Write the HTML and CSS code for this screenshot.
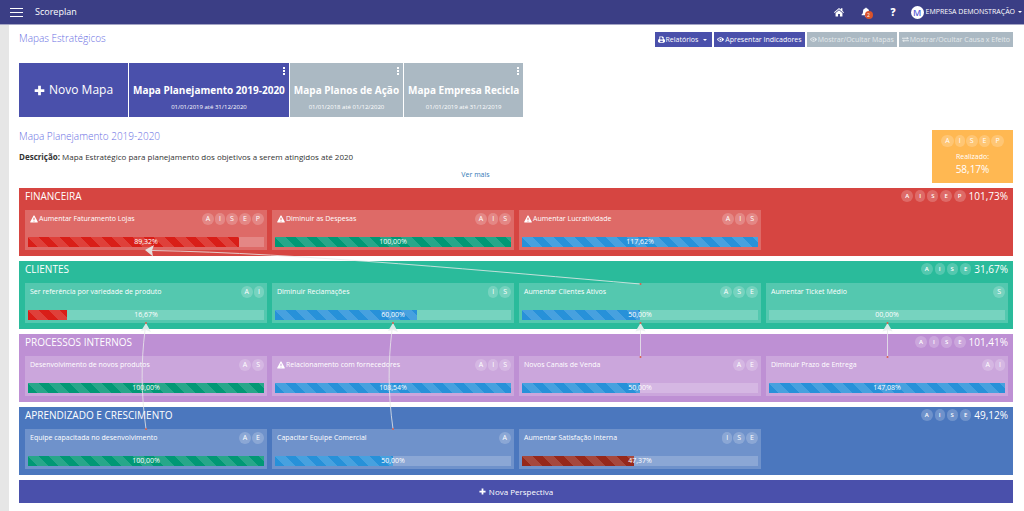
FILE: index.html
```html
<!DOCTYPE html>
<html lang="pt-BR">
<head>
<meta charset="utf-8">
<title>Scoreplan</title>
<link rel="stylesheet" href="styles.css">
</head>
<body>
<svg class="sprite" aria-hidden="true">
  <symbol id="warn" viewBox="0 0 16 16"><path fill-rule="evenodd" d="M8 1c.5 0 .9.3 1.100.6l6.400 11.700c.5 1-.1 1.700-1.100 1.700H1.600c-1 0-1.600-.7-1.100-1.700L6.900 1.600C7.100 1.300 7.500 1 8 1zM6.800 5.500l.3 4.700h1.800l.3-4.700zM7 11.300v1.800h2v-1.800z"/></symbol>
  <symbol id="plus" viewBox="0 0 16 16"><path d="M6 1h4v5h5v4h-5v5H6v-5H1V6h5z"/></symbol>
  <symbol id="eye" viewBox="0 0 16 16"><path fill-rule="evenodd" d="M8 3c3.500 0 6.500 2.200 8 5-1.500 2.800-4.500 5-8 5S1.500 10.800 0 8c1.500-2.800 4.500-5 8-5zm0 1.300a3.700 3.700 0 1 0 0 7.400 3.700 3.700 0 0 0 0-7.400zM8 6a2 2 0 1 1 0 4 2 2 0 0 1 0-4zM2 8c.6 1 1.500 2 2.500 2.600a5 5 0 0 1 0-5.200C3.500 6 2.600 7 2 8z"/></symbol>
  <symbol id="print" viewBox="0 0 16 16"><path fill-rule="evenodd" d="M3 1h8l2 2v4h1l2 2v5h-3v2H3v-2H0V9l2-2h1zm2 2v5h6V5H9V3zm0 8v3h6v-3z"/></symbol>
  <symbol id="swap" viewBox="0 0 16 16"><path d="M0 4h11V1.500L16 5l-5 3.500V6.500H0zM16 12H5v2.500L0 11l5-3.500v2H16z"/></symbol>
  <symbol id="home" viewBox="0 0 16 16"><path d="M8 1.500 11 4V2h2.500v4.200L16 8.300l-1 1.200L8 3.700 1 9.500 0 8.300zM8 5l5.500 4.500V15H9.500v-4h-3v4h-4V9.500z"/></symbol>
  <symbol id="bell" viewBox="0 0 16 16"><path d="M7 1h2v1c2.500.5 3.800 2.500 3.800 5 0 2.600.8 4 2.200 5v1H1v-1c1.400-1 2.200-2.400 2.200-5C3.200 4.500 4.500 2.500 7 2zM6 14h4c0 1.200-.8 2-2 2s-2-.8-2-2z"/></symbol>
</svg>

<header class="topbar">
  <button class="menu" aria-label="Menu"><span></span><span></span><span></span></button>
  <a class="brand" href="#">Scoreplan</a>
  <nav class="topnav">
    <a href="#" aria-label="Início"><svg class="icon"><use href="#home"/></svg></a>
    <a href="#" class="alerts" aria-label="Notificações"><svg class="icon"><use href="#bell"/></svg><span class="count">2</span></a>
    <a href="#" class="help">?</a>
    <button class="account"><span class="avatar">M</span>EMPRESA DEMONSTRAÇÃO<span class="caret"></span></button>
  </nav>
</header>

<main class="page">
  <div class="titlebar">
    <h1 class="heading">Mapas Estratégicos</h1>
    <div class="actions">
      <button class="action"><svg class="icon"><use href="#print"/></svg>Relatórios<span class="caret"></span></button>
      <button class="action"><svg class="icon"><use href="#eye"/></svg>Apresentar Indicadores</button>
      <button class="action muted"><svg class="icon"><use href="#eye"/></svg>Mostrar/Ocultar Mapas</button>
      <button class="action muted"><svg class="icon"><use href="#swap"/></svg>Mostrar/Ocultar Causa x Efeito</button>
    </div>
  </div>

  <div class="maps">
    <button class="map new"><svg class="icon"><use href="#plus"/></svg>Novo Mapa</button>
    <div class="map-item"><button class="map"><strong>Mapa Planejamento 2019-2020</strong><small>01/01/2019 até 31/12/2020</small></button><button class="kebab" aria-label="Opções"><i></i><i></i><i></i></button></div>
    <div class="map-item"><button class="map muted"><strong>Mapa Planos de Ação</strong><small>01/01/2018 até 01/12/2020</small></button><button class="kebab" aria-label="Opções"><i></i><i></i><i></i></button></div>
    <div class="map-item"><button class="map muted"><strong>Mapa Empresa Recicla</strong><small>01/01/2019 até 31/12/2019</small></button><button class="kebab" aria-label="Opções"><i></i><i></i><i></i></button></div>
  </div>

  <section class="summary">
    <div class="about">
      <h2 class="heading">Mapa Planejamento 2019-2020</h2>
      <p class="description"><b>Descrição:</b> Mapa Estratégico para planejamento dos objetivos a serem atingidos até 2020</p>
      <a class="more" href="#">Ver mais</a>
    </div>
    <div class="total">
      <span class="chips"><i>A</i><i>I</i><i>S</i><i>E</i><i>P</i></span>
      <span class="total-label">Realizado:</span>
      <span class="total-value">58,17%</span>
    </div>
  </section>

  <div class="perspectives">
    <section class="perspective red">
      <div class="p-head"><h3>FINANCEIRA</h3><span class="chips"><i>A</i><i>I</i><i>S</i><i>E</i><i>P</i></span><span class="p-value">101,73%</span></div>
      <div class="cards">
        <article class="card"><div class="c-head"><h4><svg class="icon"><use href="#warn"/></svg>Aumentar Faturamento Lojas</h4><span class="chips"><i>A</i><i>I</i><i>S</i><i>E</i><i>P</i></span></div><div class="bar"><div class="fill low" style="width:89.32%"></div><span>89,32%</span></div></article>
        <article class="card"><div class="c-head"><h4><svg class="icon"><use href="#warn"/></svg>Diminuir as Despesas</h4><span class="chips"><i>A</i><i>I</i><i>S</i></span></div><div class="bar"><div class="fill ok" style="width:100%"></div><span>100,00%</span></div></article>
        <article class="card"><div class="c-head"><h4><svg class="icon"><use href="#warn"/></svg>Aumentar Lucratividade</h4><span class="chips"><i>A</i><i>I</i><i>S</i></span></div><div class="bar"><div class="fill high" style="width:100%"></div><span>117,62%</span></div></article>
      </div>
    </section>

    <section class="perspective green">
      <div class="p-head"><h3>CLIENTES</h3><span class="chips"><i>A</i><i>I</i><i>S</i><i>E</i></span><span class="p-value">31,67%</span></div>
      <div class="cards">
        <article class="card"><div class="c-head"><h4>Ser referência por variedade de produto</h4><span class="chips"><i>A</i><i>I</i></span></div><div class="bar"><div class="fill low" style="width:16.67%"></div><span>16,67%</span></div></article>
        <article class="card"><div class="c-head"><h4>Diminuir Reclamações</h4><span class="chips"><i>I</i><i>S</i></span></div><div class="bar"><div class="fill high" style="width:60%"></div><span>60,00%</span></div></article>
        <article class="card"><div class="c-head"><h4>Aumentar Clientes Ativos</h4><span class="chips"><i>A</i><i>S</i><i>E</i></span></div><div class="bar"><div class="fill high" style="width:50%"></div><span>50,00%</span></div></article>
        <article class="card"><div class="c-head"><h4>Aumentar Ticket Médio</h4><span class="chips"><i>S</i></span></div><div class="bar"><div class="fill high" style="width:0%"></div><span>00,00%</span></div></article>
      </div>
    </section>

    <section class="perspective purple">
      <div class="p-head"><h3>PROCESSOS INTERNOS</h3><span class="chips"><i>A</i><i>I</i><i>S</i><i>E</i></span><span class="p-value">101,41%</span></div>
      <div class="cards">
        <article class="card"><div class="c-head"><h4>Desenvolvimento de novos produtos</h4><span class="chips"><i>A</i><i>S</i></span></div><div class="bar"><div class="fill ok" style="width:100%"></div><span>100,00%</span></div></article>
        <article class="card"><div class="c-head"><h4><svg class="icon"><use href="#warn"/></svg>Relacionamento com fornecedores</h4><span class="chips"><i>A</i><i>I</i><i>S</i></span></div><div class="bar"><div class="fill high" style="width:100%"></div><span>108,54%</span></div></article>
        <article class="card"><div class="c-head"><h4>Novos Canais de Venda</h4><span class="chips"><i>A</i><i>E</i></span></div><div class="bar"><div class="fill high" style="width:50%"></div><span>50,00%</span></div></article>
        <article class="card"><div class="c-head"><h4>Diminuir Prazo de Entrega</h4><span class="chips"><i>A</i><i>I</i></span></div><div class="bar"><div class="fill high" style="width:100%"></div><span>147,08%</span></div></article>
      </div>
    </section>

    <section class="perspective blue">
      <div class="p-head"><h3>APRENDIZADO E CRESCIMENTO</h3><span class="chips"><i>A</i><i>I</i><i>S</i><i>E</i></span><span class="p-value">49,12%</span></div>
      <div class="cards">
        <article class="card"><div class="c-head"><h4>Equipe capacitada no desenvolvimento</h4><span class="chips"><i>A</i><i>E</i></span></div><div class="bar"><div class="fill ok" style="width:100%"></div><span>100,00%</span></div></article>
        <article class="card"><div class="c-head"><h4>Capacitar Equipe Comercial</h4><span class="chips"><i>A</i></span></div><div class="bar"><div class="fill high" style="width:50%"></div><span>50,00%</span></div></article>
        <article class="card"><div class="c-head"><h4>Aumentar Satisfação Interna</h4><span class="chips"><i>I</i><i>S</i><i>E</i></span></div><div class="bar"><div class="fill critical" style="width:47.37%"></div><span>47,37%</span></div></article>
      </div>
    </section>

    <svg class="links" viewBox="0 0 994 287" preserveAspectRatio="none" aria-hidden="true">
      <g class="lines">
        <path d="M621.500 96C480 84 280 65 133 62.500"/>
        <path d="M127 241C122 205 122 175 126 142"/>
        <path d="M374 241C369 205 369 175 373 142"/>
        <path d="M621.500 168V142"/>
        <path d="M868.500 168V142"/>
      </g>
      <g class="heads">
        <path d="M126 62l9-5-2 5.500 1 6z"/>
        <path d="M127 135l5 9-5-2-5 1z"/>
        <path d="M374 135l5 9-5-2-5 1z"/>
        <path d="M621.500 135l5 8.500-5-1.500-5 1.500z"/>
        <path d="M868.500 135l5 8.500-5-1.500-5 1.500z"/>
      </g>
      <g class="dots">
        <circle cx="621.500" cy="96" r="1"/><circle cx="127" cy="241" r="1"/><circle cx="374" cy="241" r="1"/><circle cx="621.500" cy="169" r="1"/><circle cx="868.500" cy="169" r="1"/>
        <circle cx="127" cy="135" r="1"/><circle cx="374" cy="135" r="1"/><circle cx="621.500" cy="135" r="1"/><circle cx="868.500" cy="135" r="1"/>
      </g>
    </svg>
  </div>

  <button class="add"><svg class="icon"><use href="#plus"/></svg>Nova Perspectiva</button>
</main>
</body>
</html>
```
FILE: styles.css
```css
* { box-sizing: border-box; }
body {
  margin: 0;
  background: #e6e6e6;
  color: #333;
  font: 7px/10px "Open Sans", "Noto Sans", sans-serif;
}
h1, h2, h3, h4, p { margin: 0; font-weight: 400; }
button { border: 0; padding: 0; background: none; color: inherit; font: inherit; cursor: pointer; }
a { color: inherit; text-decoration: none; }
.sprite { position: absolute; width: 0; height: 0; }
.icon { width: 7px; height: 7px; fill: currentColor; flex: none; }
.caret { border: 2px solid transparent; border-top-color: currentColor; border-bottom: 0; }

.topbar {
  display: flex;
  align-items: center;
  height: 25px;
  padding: 0 2px 0 10px;
  background: #3b3e85;
  border-bottom: 1px solid #a3a4c4;
  color: #fff;
}
.menu { display: grid; gap: 3px; width: 13px; }
.menu span { height: 1px; background: #fff; }
.brand { margin-left: 12px; font-size: 9px; }
.topnav { display: flex; align-items: center; margin-left: auto; }
.topnav .icon { display: block; width: 10px; height: 10px; }
.alerts { position: relative; margin-left: 17px; }
.count {
  position: absolute;
  left: 4px;
  top: 4px;
  width: 8px;
  height: 8px;
  border-radius: 50%;
  background: #d9532c;
  font-size: 5px;
  line-height: 8px;
  text-align: center;
}
.help { margin-left: 20px; font-size: 10px; font-weight: 800; }
.account { display: flex; align-items: center; margin-left: 15px; }
.account .caret { margin-left: 3px; }
.avatar {
  width: 13px;
  height: 13px;
  margin-right: 2px;
  border-radius: 50%;
  background: #fff;
  color: #5a60d8;
  font-size: 9px;
  font-weight: 600;
  line-height: 13px;
}

.page { margin-left: 9px; padding: 7px 11px 8px 10px; background: #fff; }
.heading { color: #6a6fe4; font-size: 10px; font-weight: 300; line-height: 12px; }
.titlebar { display: flex; justify-content: space-between; align-items: flex-start; }
.actions { display: flex; gap: 2px; }
.action {
  display: flex;
  align-items: center;
  gap: 1px;
  height: 15px;
  padding: 0 3px;
  background: #4a50ab;
  color: #fff;
}
.action .caret { margin: 0 2px 0 4px; }
.muted { background: #abb9c3; }
.action.muted { color: #e4e9ec; }

.maps { display: flex; gap: 1px; margin-top: 16px; }
.map {
  display: flex;
  flex-direction: column;
  align-items: center;
  height: 54px;
  padding: 20px 4px 0;
  background: #4a50ab;
  color: #fff;
}
.map.muted { background: #abb9c3; }
.map.new { flex-direction: row; justify-content: center; gap: 4px; padding: 0 15px; font-size: 12px; }
.map.new .icon { width: 11px; height: 11px; }
.map strong { font-size: 10px; font-weight: 700; line-height: 14px; }
.map small { margin-top: 6px; font-size: 6px; line-height: 8px; }
.map-item { position: relative; }
.kebab { position: absolute; top: 4px; right: 4px; display: grid; gap: 1px; }
.kebab i { width: 2px; height: 2px; background: #fff; }

.summary { display: flex; margin: 13px 0 5px; }
.about { display: flex; flex-direction: column; flex: 1; }
.description { margin-top: 10px; font-size: 8px; }
.more { align-self: center; margin-top: 8px; color: #337ab7; }
.total {
  display: flex;
  flex-direction: column;
  align-items: center;
  width: 81px;
  height: 53px;
  padding-top: 5px;
  background: #ffb852;
  color: #fff;
}
.total-label { margin-top: 5px; }
.total-value { font-size: 10px; line-height: 14px; }

.chips { display: flex; gap: 1px; flex: none; }
.chips i {
  padding: 0 4px;
  border-radius: 6px;
  background: rgba(255, 255, 255, .2);
  font-style: normal;
  line-height: 12px;
}
.p-head .chips { gap: 2px; font-size: 6px; font-weight: 600; }

.perspectives { position: relative; display: grid; gap: 5px; }
.perspective { padding: 1px 5px 6px 6px; color: #fff; }
.red { background: #d64541; }
.green { background: #2abb9b; }
.purple { background: #be90d4; }
.blue { background: #4b77be; }
.p-head { display: flex; align-items: center; height: 14px; margin-bottom: 7px; }
.p-head h3 { margin-right: auto; font-size: 10px; line-height: 14px; }
.p-value { margin-left: 3px; font-size: 10px; line-height: 14px; }
.cards { display: grid; grid-template-columns: repeat(4, 1fr); gap: 5px; }
.card { padding: 3px; background: rgba(255, 255, 255, .2); }
.c-head { display: flex; justify-content: space-between; align-items: center; height: 12px; padding-left: 2px; }
.c-head h4 { display: flex; align-items: center; gap: 1px; font-size: 7px; line-height: 10px; }
.c-head .icon { width: 8px; height: 8px; }
.bar { position: relative; height: 10px; margin-top: 12px; background: rgba(255, 255, 255, .2); }
.bar span { position: absolute; inset: 0; font-size: 7px; line-height: 10px; text-align: center; }
.fill {
  height: 100%;
  background-image: linear-gradient(45deg, rgba(255, 255, 255, .15) 25%, transparent 25%, transparent 50%, rgba(255, 255, 255, .15) 50%, rgba(255, 255, 255, .15) 75%, transparent 75%);
  background-size: 21px 21px;
}
.low { background-color: #d91e18; }
.ok { background-color: #019875; }
.high { background-color: #2791d9; }
.critical { background-color: #96281b; }

.links { position: absolute; inset: 0; width: 100%; height: 100%; pointer-events: none; }
.lines { fill: none; stroke: #e8eaea; stroke-opacity: .8; }
.heads { fill: #e8efee; fill-opacity: .9; }
.dots { fill: #d8604c; }

.add {
  display: flex;
  align-items: center;
  justify-content: center;
  gap: 3px;
  width: 100%;
  height: 23px;
  margin-top: 5px;
  background: #4a50ab;
  color: #fff;
  font-size: 8px;
}
```
